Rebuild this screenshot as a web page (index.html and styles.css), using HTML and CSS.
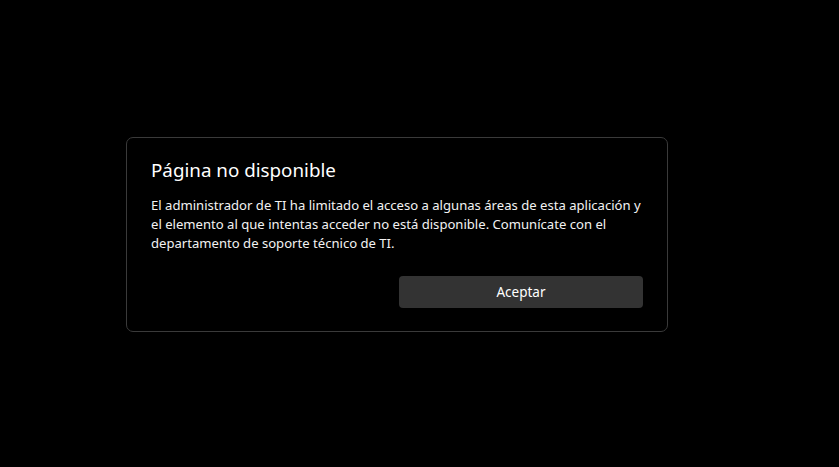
FILE: index.html
```html
<!DOCTYPE html>
<html lang="es">

<head>
    <meta charset="UTF-8">
    <meta name="viewport" content="width=device-width, initial-scale=1.0">
    <title>Página no disponible</title>
    <link rel="stylesheet" href="styles.css">
</head>

<body>
    <div class="dialog">
        <h1 class="dialog-title">Página no disponible</h1>
        <p class="dialog-text">El administrador de TI ha limitado el acceso a algunas áreas de esta aplicación y el elemento al que intentas acceder no está disponible. Comunícate con el departamento de soporte técnico de TI.</p>
        <div class="dialog-buttons">
            <span></span>
            <button class="accept-button">Aceptar</button>
        </div>
    </div>
</body>

</html>
```

FILE: styles.css
```css
html,
body {
    height: 100%;
}

body {
    margin: 0;
    background-color: #000000;
    font-family: "Noto Sans", "Open Sans", sans-serif;
    color: #ffffff;
    display: flex;
    align-items: center;
}

.dialog {
    margin: 2px 0 0 126px;
    width: 492px;
    padding: 18px 24px 23px 24px;
    border: 1px solid #3a3a3a;
    border-radius: 7px;
    background-color: #000000;
}

.dialog-title {
    margin: 0 0 12px 0;
    font-size: 18.8px;
    font-weight: normal;
    line-height: 28px;
}

.dialog-text {
    margin: 0;
    font-size: 13.1px;
    line-height: 19px;
    color: #f2f2f2;
}

.dialog-buttons {
    display: grid;
    grid-template-columns: 1fr 1fr;
    gap: 4px;
    margin-top: 23px;
}

.accept-button {
    height: 32px;
    font-family: inherit;
    font-size: 13.5px;
    color: #ffffff;
    background-color: #333333;
    border: none;
    border-radius: 4px;
}
```
